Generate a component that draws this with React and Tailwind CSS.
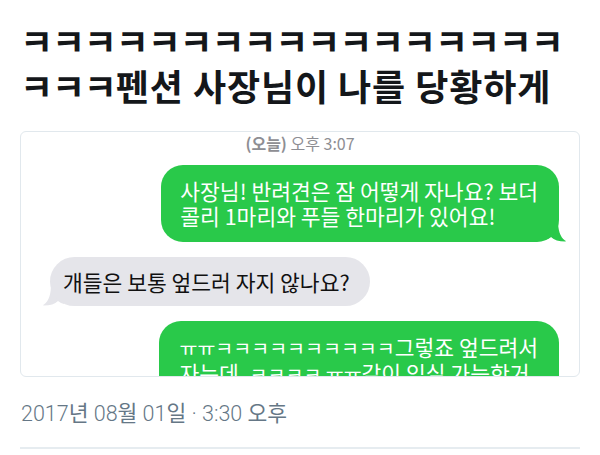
export default function App() {
  return (
    <main className="w-[600px] h-[455px] bg-white overflow-hidden font-['Noto_Sans_CJK_KR',sans-serif]">
      <h1 className="pl-[20px] pt-[18px] text-[36px] leading-[45px] font-bold text-[#14171a]">
        <span className="block tracking-[-1.2px]">ㅋㅋㅋㅋㅋㅋㅋㅋㅋㅋㅋㅋㅋㅋㅋㅋㅋ</span>
        <span className="block whitespace-nowrap tracking-[0.9px]">
          <span className="tracking-[-1.2px]">ㅋㅋㅋ</span>펜션 사장님이 나를 당황하게
        </span>
      </h1>

      <div className="mx-[20px] mt-[23px] h-[246px] border border-[#e1e8ed] rounded-[6px] overflow-hidden flex flex-col">
        <p className="text-center text-[16px] leading-[18px] pt-[2px] text-[#8e8e93]">
          <span className="font-semibold">(오늘)</span> 오후 3:07
        </p>

        <div className="self-end mr-[20px] mt-[13px] relative">
          <div className="relative z-10 bg-[#29c94a] text-white text-[21.5px] leading-[25px] rounded-[22px] pl-[19px] pr-[21px] pt-[13px] pb-[14px] whitespace-nowrap">
            사장님! 반려견은 잠 어떻게 자나요? 보더
            <br />
            콜리 1마리와 푸들 한마리가 있어요!
          </div>
          <Tail side="right" color="#29c94a" />
        </div>

        <div className="self-start ml-[29px] mt-[15px] relative">
          <div className="relative z-10 bg-[#e5e5ea] text-[#111] text-[21.5px] leading-[25px] rounded-full pl-[13px] pr-[20px] py-[12px] whitespace-nowrap">
            개들은 보통 엎드러 자지 않나요?
          </div>
          <Tail side="left" color="#e5e5ea" />
        </div>

        <div className="self-end mr-[20px] mt-[15px]">
          <div className="bg-[#29c94a] text-white text-[21.5px] leading-[25px] rounded-[22px] pl-[20px] pr-[21px] pt-[13px] pb-[14px] whitespace-nowrap">
            <span className="text-[19.5px]">ㅠㅠㅋㅋㅋㅋㅋㅋㅋㅋㅋㅋ</span>그렇죠 엎드려서
            <br />
            자는데. <span className="text-[19.5px]">ㅋㅋㅋㅋ ㅠㅠ</span>같이 입실 가능한거
            <br />
            맞죠?
          </div>
        </div>
      </div>

      <p className="mx-[21px] mt-[24px] text-[21.5px] leading-[26px] text-[#657786] font-['Roboto','Noto_Sans_CJK_KR',sans-serif] font-light">
        2017<span className="font-normal">년</span> 08<span className="font-normal">월</span> 01
        <span className="font-normal">일</span> · 3:30 <span className="font-normal">오후</span>
      </p>

      <div className="mx-[20px] mt-[20px] h-[2px] bg-[#e6ecf0]" />
    </main>
  );
}

function Tail({ side, color }) {
  // little hook under the bubble, mirrored for the incoming side
  const pos = side === "right" ? "right-[-10px]" : "left-[-10px] -scale-x-100";
  return (
    <svg
      className={`absolute bottom-0 ${pos} w-[24px] h-[22px]`}
      viewBox="0 0 24 22"
    >
      <path
        d="M0 0 H13 C13 10 15 17 20 20.5 C21 21 21 21.5 20 21.5 C14 21.5 9 20 6 17 C4 18.5 2 19.5 0 20 Z"
        fill={color}
      />
    </svg>
  );
}
